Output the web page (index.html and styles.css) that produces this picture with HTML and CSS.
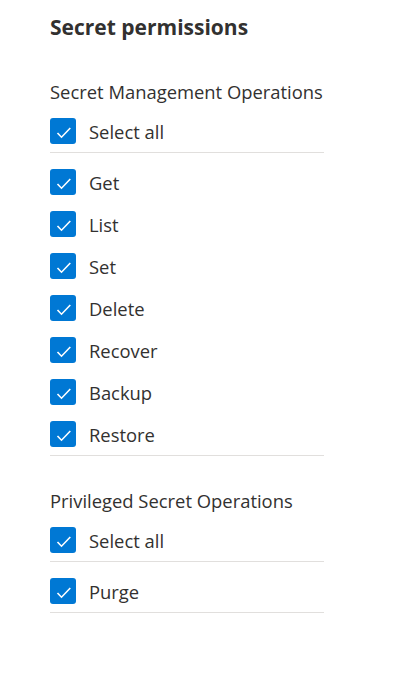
FILE: index.html
```html
<!DOCTYPE html>
<html lang="en">
  <head>
    <meta charset="UTF-8" />
    <meta name="viewport" content="width=device-width, initial-scale=1.0" />
    <title>Secret permissions</title>
    <link rel="stylesheet" href="styles.css">
  </head>

  <body>
    <div class="panel">
      <h2 class="panel-title">Secret permissions</h2>

      <section class="group">
        <div class="group-label">Secret Management Operations</div>
        <label class="check-row">
          <span class="box"><svg viewBox="0 0 26 26"><path d="M7.5 15l4 4.2 8.8-9.2" /></svg></span>
          <span class="check-text">Select all</span>
        </label>
        <div class="divider divider-top"></div>
        <label class="check-row">
          <span class="box"><svg viewBox="0 0 26 26"><path d="M7.5 15l4 4.2 8.8-9.2" /></svg></span>
          <span class="check-text">Get</span>
        </label>
        <label class="check-row">
          <span class="box"><svg viewBox="0 0 26 26"><path d="M7.5 15l4 4.2 8.8-9.2" /></svg></span>
          <span class="check-text">List</span>
        </label>
        <label class="check-row">
          <span class="box"><svg viewBox="0 0 26 26"><path d="M7.5 15l4 4.2 8.8-9.2" /></svg></span>
          <span class="check-text">Set</span>
        </label>
        <label class="check-row">
          <span class="box"><svg viewBox="0 0 26 26"><path d="M7.5 15l4 4.2 8.8-9.2" /></svg></span>
          <span class="check-text">Delete</span>
        </label>
        <label class="check-row">
          <span class="box"><svg viewBox="0 0 26 26"><path d="M7.5 15l4 4.2 8.8-9.2" /></svg></span>
          <span class="check-text">Recover</span>
        </label>
        <label class="check-row">
          <span class="box"><svg viewBox="0 0 26 26"><path d="M7.5 15l4 4.2 8.8-9.2" /></svg></span>
          <span class="check-text">Backup</span>
        </label>
        <label class="check-row">
          <span class="box"><svg viewBox="0 0 26 26"><path d="M7.5 15l4 4.2 8.8-9.2" /></svg></span>
          <span class="check-text">Restore</span>
        </label>
        <div class="divider"></div>
      </section>

      <section class="group group-second">
        <div class="group-label">Privileged Secret Operations</div>
        <label class="check-row">
          <span class="box"><svg viewBox="0 0 26 26"><path d="M7.5 15l4 4.2 8.8-9.2" /></svg></span>
          <span class="check-text">Select all</span>
        </label>
        <div class="divider divider-top"></div>
        <label class="check-row">
          <span class="box"><svg viewBox="0 0 26 26"><path d="M7.5 15l4 4.2 8.8-9.2" /></svg></span>
          <span class="check-text">Purge</span>
        </label>
        <div class="divider"></div>
      </section>
    </div>
  </body>
</html>
```

FILE: styles.css
```css
body {
  font-family: "Open Sans", "Noto Sans", sans-serif;
  margin: 0;
  color: #323130;
  background: #fff;
}

.panel {
  width: 274px;
  padding: 13px 0 0 50px;
}

.panel-title {
  font-size: 21px;
  font-weight: 700;
  line-height: 28px;
  margin: 0 0 39px;
}

.group-label {
  font-size: 18.4px;
  line-height: 24px;
  margin-bottom: 6px;
}

.check-row {
  display: flex;
  align-items: center;
  gap: 13px;
  height: 42px;
  font-size: 18.4px;
}

.box {
  width: 26px;
  height: 26px;
  border-radius: 3px;
  background: #0078d4;
  display: flex;
}

.box svg {
  width: 26px;
  height: 26px;
  fill: none;
  stroke: #fff;
  stroke-width: 1.6;
}

.divider {
  height: 1px;
  background: #e1dfdd;
}

.divider-top {
  margin-bottom: 8px;
}

.group-second {
  margin-top: 33px;
}
```
